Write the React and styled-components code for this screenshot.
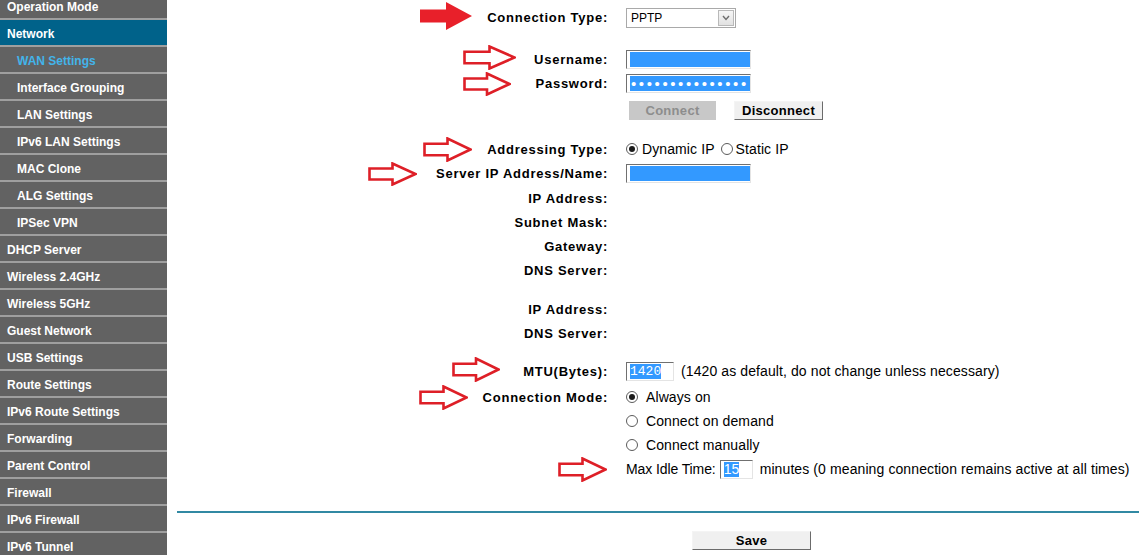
import React from 'react';
import styled, { createGlobalStyle } from 'styled-components';

const GlobalStyle = createGlobalStyle`
  body {
    margin: 0;
    background: #fff;
  }
`;

const Page = styled.div`
  position: relative;
  display: flex;
  width: 1139px;
  height: 555px;
  overflow: hidden;
  font-family: 'Liberation Sans', Arial, sans-serif;
  color: #000;
`;

const Sidebar = styled.nav`
  width: 167px;
  flex-shrink: 0;
  margin-top: -7px;
  display: flex;
  flex-direction: column;
  background: #626262;
`;

const NavItem = styled.div`
  display: flex;
  align-items: center;
  box-sizing: border-box;
  height: 27px;
  flex-shrink: 0;
  padding: 3px 0 0 ${({ $sub }) => ($sub ? 17 : 7)}px;
  border-bottom: 2px solid #9f9f9f;
  background: ${({ $active }) => ($active ? '#00628a' : 'transparent')};
  color: ${({ $current }) => ($current ? '#42b4ea' : '#fff')};
  font-size: 12px;
  font-weight: bold;
  white-space: nowrap;
`;

const Main = styled.main`
  flex: 1;
  display: flex;
  flex-direction: column;
  padding: 5px 0 0 10px;
`;

const Row = styled.div`
  display: grid;
  grid-template-columns: 431px auto;
  column-gap: 18px;
  align-items: center;
  height: 24px;
  margin-top: ${({ $gap }) => $gap || 0}px;
`;

const Label = styled.div`
  text-align: right;
  font-size: 13px;
  font-weight: bold;
  letter-spacing: 0.75px;
  white-space: nowrap;
`;

const Value = styled.div`
  display: flex;
  align-items: center;
  font-size: 14px;
  letter-spacing: 0.1px;
  white-space: nowrap;
`;

const Select = styled.div`
  display: flex;
  align-items: center;
  justify-content: space-between;
  box-sizing: border-box;
  width: 110px;
  height: 20px;
  margin-top: 2px;
  padding-left: 4px;
  border: 1px solid #a9a9a9;
  font-size: 12px;
  letter-spacing: 0;
`;

const SelectButton = styled.span`
  display: flex;
  align-items: center;
  justify-content: center;
  width: 16px;
  height: 16px;
  margin-right: 1px;
  border: 1px solid #b9b9b9;
  box-sizing: border-box;
  background: linear-gradient(#f6f6f6, #e2e2e2);
`;

const Field = styled.span`
  display: inline-flex;
  box-sizing: border-box;
  width: ${({ $w }) => $w}px;
  height: 19px;
  margin-left: ${({ $left }) => $left || 0}px;
  padding: 1px 0 1px 3px;
  border-top: 1px solid #707070;
  border-left: 1px solid #707070;
  border-right: 1px solid #e4e4e4;
  border-bottom: 1px solid #e4e4e4;
`;

const Selected = styled.span`
  display: flex;
  align-items: center;
  flex: ${({ $fill }) => ($fill ? 1 : '0 0 auto')};
  background: #3399ff;
  color: #fff;
  font-family: ${({ $mono }) => ($mono ? "'Liberation Mono', monospace" : 'inherit')};
  font-size: ${({ $mono }) => ($mono ? 13 : 14)}px;
  letter-spacing: 0;
  line-height: 1;
  overflow: hidden;
`;

const Dots = styled.span`
  padding-left: 1px;
  font-size: 15px;
  letter-spacing: 2.6px;
  line-height: 15px;
`;

const Button = styled.button`
  box-sizing: border-box;
  height: 19px;
  padding: 0;
  font-family: inherit;
  font-size: 13px;
  font-weight: bold;
  letter-spacing: 0.3px;
  line-height: 1;
`;

const ConnectButton = styled(Button)`
  width: 87px;
  margin-left: 3px;
  border: 1px solid #c8c8c8;
  background: #c8c8c8;
  color: #8d8d8d;
`;

const PlainButton = styled(Button)`
  width: ${({ $w }) => $w}px;
  margin-left: ${({ $offset }) => $offset || 0}px;
  border-top: 1px solid #f4f4f4;
  border-left: 1px solid #f4f4f4;
  border-right: 1px solid #6b6b6b;
  border-bottom: 1px solid #6b6b6b;
  background: #f0f0f0;
  color: #000;
`;

const Radio = styled.span`
  position: relative;
  display: inline-block;
  box-sizing: border-box;
  width: 12px;
  height: 12px;
  margin-left: ${({ $before }) => $before || 0}px;
  margin-right: ${({ $space }) => $space}px;
  border: 1px solid #5b5b5b;
  border-radius: 50%;
  background: #fff;

  &::after {
    content: '';
    display: ${({ $on }) => ($on ? 'block' : 'none')};
    position: absolute;
    left: 2px;
    top: 2px;
    width: 6px;
    height: 6px;
    border-radius: 50%;
    background: #1b1b1b;
  }
`;

const Note = styled.span`
  margin-left: ${({ $left }) => $left}px;
`;

const IdleLabel = styled.span`
  letter-spacing: -0.1px;
`;

const Divider = styled.hr`
  width: 100%;
  height: 2px;
  margin: 30px 0 0;
  border: 0;
  background: #3189a3;
`;

const Footer = styled.div`
  margin-top: 18px;
`;

const ArrowSvg = styled.svg`
  position: absolute;
  left: ${({ $x }) => $x}px;
  top: ${({ $y }) => $y}px;
`;

function Arrow({ x, y, w = 50, h = 25, filled }) {
  const m = filled ? 0 : 1.5;
  const mid = h / 2;
  const base = w * 0.5;
  const s1 = h * 0.27;
  const s2 = h * 0.73;
  const pts = [
    [m, s1], [base, s1], [base, m], [w - m, mid],
    [base, h - m], [base, s2], [m, s2],
  ].map((p) => p.join(',')).join(' ');
  return (
    <ArrowSvg $x={x} $y={y} width={w} height={h} viewBox={`0 0 ${w} ${h}`}>
      <polygon
        points={pts}
        fill={filled ? '#e8202a' : '#fff'}
        stroke={filled ? 'none' : '#de1f27'}
        strokeWidth="2.6"
        strokeLinejoin="miter"
      />
    </ArrowSvg>
  );
}

const menu = [
  { label: 'Operation Mode' },
  { label: 'Network', active: true },
  { label: 'WAN Settings', sub: true, current: true },
  { label: 'Interface Grouping', sub: true },
  { label: 'LAN Settings', sub: true },
  { label: 'IPv6 LAN Settings', sub: true },
  { label: 'MAC Clone', sub: true },
  { label: 'ALG Settings', sub: true },
  { label: 'IPSec VPN', sub: true },
  { label: 'DHCP Server' },
  { label: 'Wireless 2.4GHz' },
  { label: 'Wireless 5GHz' },
  { label: 'Guest Network' },
  { label: 'USB Settings' },
  { label: 'Route Settings' },
  { label: 'IPv6 Route Settings' },
  { label: 'Forwarding' },
  { label: 'Parent Control' },
  { label: 'Firewall' },
  { label: 'IPv6 Firewall' },
  { label: 'IPv6 Tunnel' },
];

export default function App() {
  return (
    <>
      <GlobalStyle />
      <Page>
        <Sidebar>
          {menu.map((m) => (
            <NavItem key={m.label} $sub={m.sub} $active={m.active} $current={m.current}>
              {m.label}
            </NavItem>
          ))}
        </Sidebar>

        <Main>
          <Row>
            <Label>Connection Type:</Label>
            <Value>
              <Select>
                PPTP
                <SelectButton>
                  <svg width="8" height="6" viewBox="0 0 8 6">
                    <polyline points="1,1 4,4.5 7,1" fill="none" stroke="#6e6e6e" strokeWidth="1.4" />
                  </svg>
                </SelectButton>
              </Select>
            </Value>
          </Row>

          <Row $gap={18}>
            <Label>Username:</Label>
            <Value>
              <Field $w={125}><Selected $fill /></Field>
            </Value>
          </Row>
          <Row>
            <Label>Password:</Label>
            <Value>
              <Field $w={125}>
                <Selected $fill><Dots>•••••••••••••••</Dots></Selected>
              </Field>
            </Value>
          </Row>
          <Row $gap={3}>
            <span />
            <Value>
              <ConnectButton>Connect</ConnectButton>
              <PlainButton $w={89} $offset={18}>Disconnect</PlainButton>
            </Value>
          </Row>

          <Row $gap={15}>
            <Label>Addressing Type:</Label>
            <Value>
              <Radio $on $space={4} />Dynamic IP
              <Radio $before={6} $space={3} />Static IP
            </Value>
          </Row>
          <Row>
            <Label>Server IP Address/Name:</Label>
            <Value>
              <Field $w={125}><Selected $fill /></Field>
            </Value>
          </Row>
          <Row $gap={1}>
            <Label>IP Address:</Label>
          </Row>
          <Row>
            <Label>Subnet Mask:</Label>
          </Row>
          <Row>
            <Label>Gateway:</Label>
          </Row>
          <Row>
            <Label>DNS Server:</Label>
          </Row>

          <Row $gap={15}>
            <Label>IP Address:</Label>
          </Row>
          <Row>
            <Label>DNS Server:</Label>
          </Row>

          <Row $gap={14}>
            <Label>MTU(Bytes):</Label>
            <Value>
              <Field $w={48}><Selected $mono>1420</Selected></Field>
              <Note $left={7}>(1420 as default, do not change unless necessary)</Note>
            </Value>
          </Row>
          <Row $gap={2}>
            <Label>Connection Mode:</Label>
            <Value>
              <Radio $on $space={8} />Always on
            </Value>
          </Row>
          <Row>
            <span />
            <Value>
              <Radio $space={8} />Connect on demand
            </Value>
          </Row>
          <Row>
            <span />
            <Value>
              <Radio $space={8} />Connect manually
            </Value>
          </Row>
          <Row>
            <span />
            <Value>
              <IdleLabel>Max Idle Time:</IdleLabel>
              <Field $w={33} $left={4}><Selected>15</Selected></Field>
              <Note $left={7}>minutes (0 meaning connection remains active at all times)</Note>
            </Value>
          </Row>

          <Divider />
          <Footer>
            <PlainButton $w={119} $offset={515}>Save</PlainButton>
          </Footer>
        </Main>

        <Arrow x={420} y={2} w={52} h={28} filled />
        <Arrow x={463} y={45} w={53} h={25} />
        <Arrow x={463} y={72} w={48} h={24} />
        <Arrow x={423} y={137} w={49} h={25} />
        <Arrow x={368} y={162} w={49} h={24} />
        <Arrow x={452} y={357} w={48} h={25} />
        <Arrow x={419} y={385} w={49} h={25} />
        <Arrow x={558} y={457} w={49} h={25} />
      </Page>
    </>
  );
}
